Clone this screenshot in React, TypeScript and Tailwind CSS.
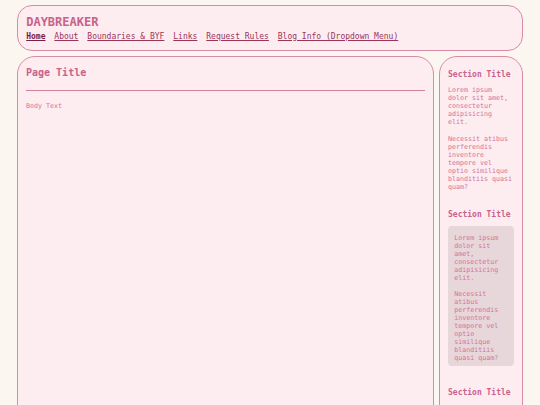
import React from "react";

const mono = { fontFamily: '"DejaVu Sans Mono", "Liberation Mono", monospace' };

function Section({ title, boxed, className }: { title: string; boxed?: boolean; className?: string }) {
  const paras = (
    <>
      <p className="text-[6.67px] leading-[8px] text-[#d2739a]">Lorem ipsum dolor sit amet, consectetur adipisicing elit.</p>
      <p className={`text-[6.67px] leading-[8px] text-[#d2739a] ${boxed ? "mt-[7.7px]" : "mt-[8.4px]"}`}>
        Necessit atibus perferendis inventore tempore vel optio similique blanditiis quasi quam?
      </p>
    </>
  );
  return (
    <div className={className}>
      <h3 className="text-[8px] leading-[9.3px] font-bold text-[#c8628b]">{title}</h3>
      {boxed ? (
        <div className="mt-[6.5px] rounded-[4px] bg-[#e8d7da] px-[6.3px] pt-[8.7px] pb-[4.3px]">{paras}</div>
      ) : (
        <div className="mt-[6.9px]">{paras}</div>
      )}
    </div>
  );
}

export default function App() {
  const links = ["About", "Boundaries & BYF", "Links", "Request Rules", "Blog Info (Dropdown Menu)"];
  return (
    <div className="min-h-screen bg-[#fcf6f1] pl-[17px] pr-[17.5px] pt-[4.5px] overflow-hidden h-[405px]" style={mono}>
      <header className="h-[46.2px] rounded-[15px] border-[1.33px] border-[#d98aa6] bg-[#fdedf0] pl-[8.2px] pt-[9.3px]">
        <div className="text-[12px] leading-[14px] font-bold text-[#c8628b]">DAYBREAKER</div>
        <nav className="mt-[2.8px] flex gap-[8.9px] text-[8px] leading-[9.3px]">
          <a className="font-bold text-[#7d1f40] underline">Home</a>
          {links.map((l) => (
            <a key={l} className="text-[#9b3458] underline">
              {l}
            </a>
          ))}
        </nav>
      </header>
      <div className="mt-[5px] flex gap-[5px]">
        <main className="h-[420px] flex-1 rounded-t-[18px] border-[1.33px] border-[#d98aa6] bg-[#fdedf0] px-[8px] pt-[10.4px]">
          <h1 className="text-[10px] leading-[11.6px] font-bold text-[#c8628b]">Page Title</h1>
          <hr className="mt-[11.3px] border-0 border-t-[1.33px] border-[#d4809f]" />
          <p className="mt-[10.8px] text-[6.67px] leading-[8px] text-[#d2739a]">Body Text</p>
        </main>
        <aside className="h-[420px] w-[83.5px] shrink-0 rounded-t-[18px] border-[1.33px] border-[#d98aa6] bg-[#fdedf0] px-[8px] pt-[13.3px]">
          <Section title="Section Title" />
          <Section title="Section Title" boxed className="mt-[19.4px]" />
          <Section title="Section Title" className="mt-[21.5px]" />
        </aside>
      </div>
    </div>
  );
}
